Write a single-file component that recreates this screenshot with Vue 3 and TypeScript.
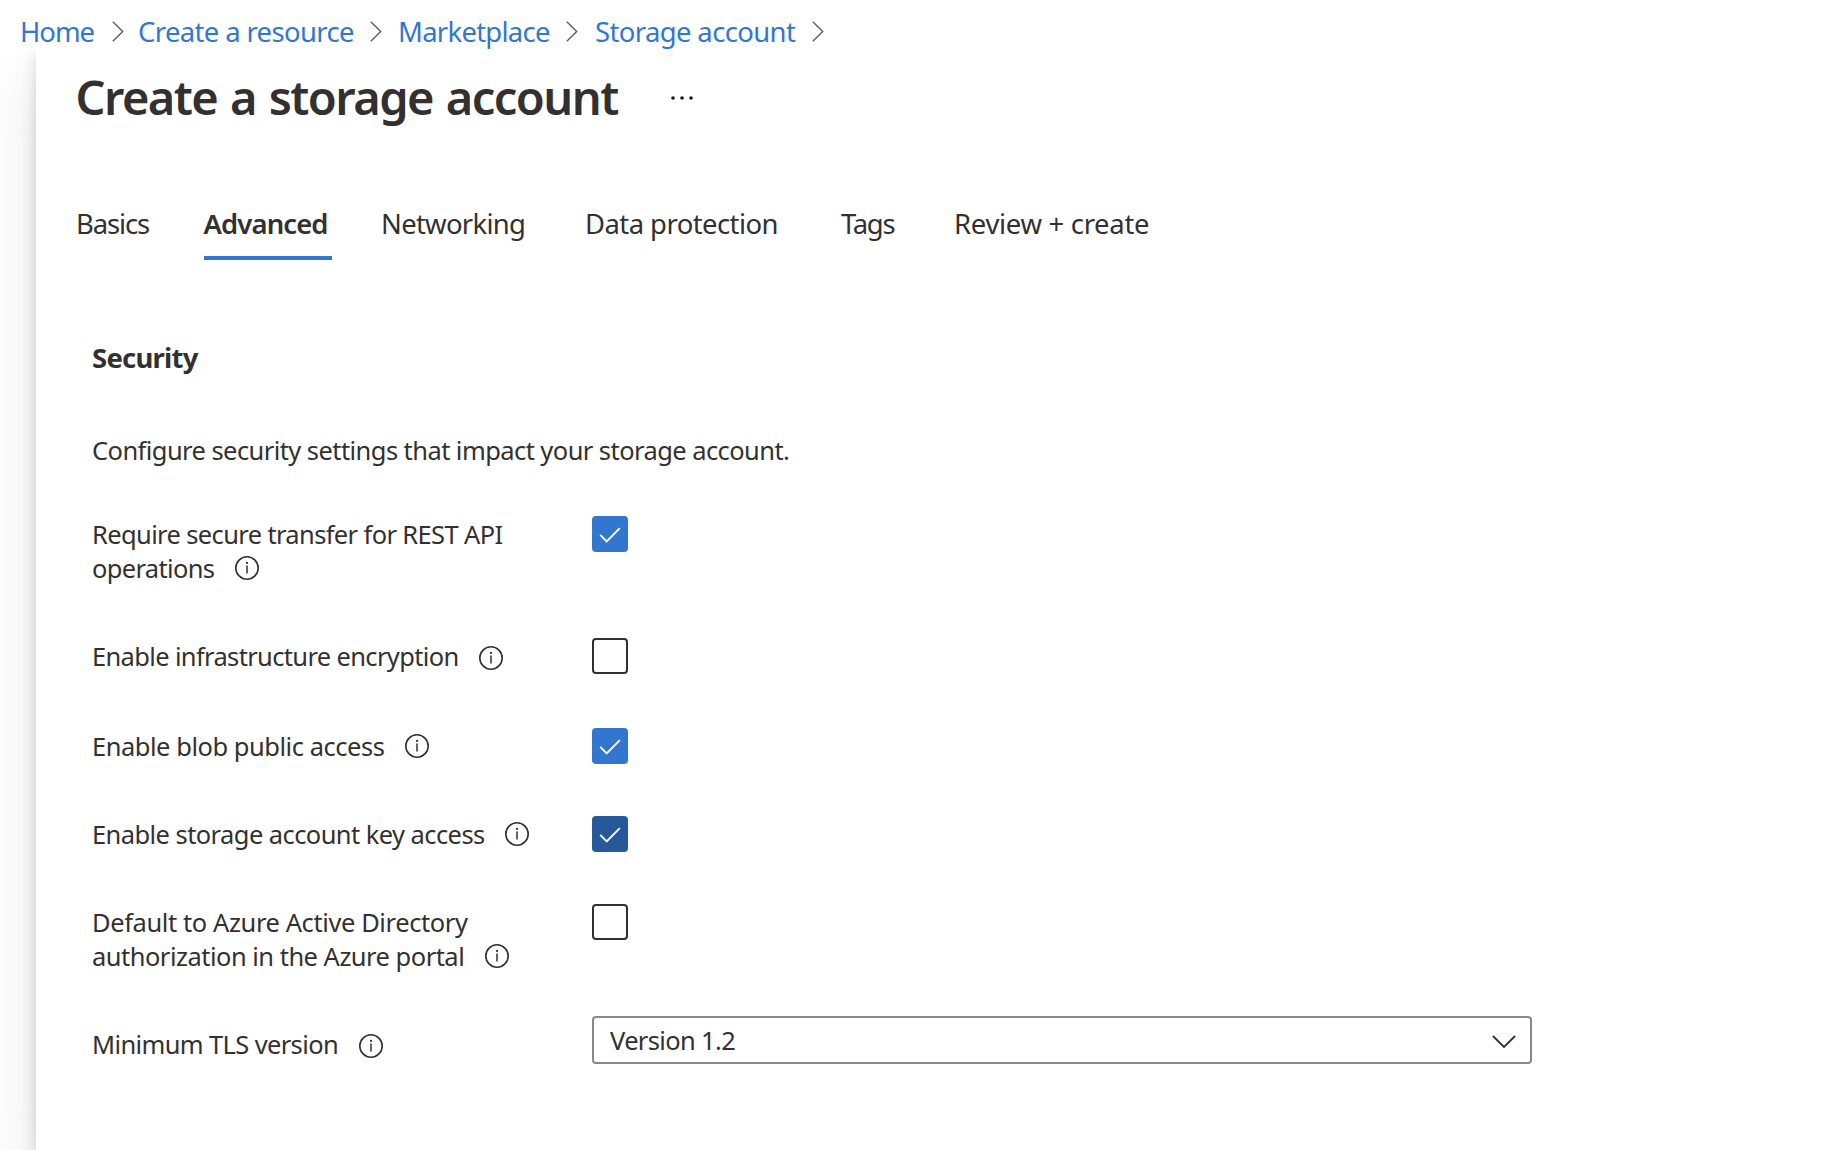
<script setup lang="ts">
interface Crumb { text: string; spacing: number }
interface Tab { text: string; spacing: number; active?: boolean }
interface Line { text: string; spacing: number }
interface Setting {
  lines: Line[]
  control: 'checkbox' | 'select'
  checked?: boolean
  hovered?: boolean
  lowered?: boolean
}

const crumbs: Crumb[] = [
  { text: 'Home', spacing: -1.0 },
  { text: 'Create a resource', spacing: -0.62 },
  { text: 'Marketplace', spacing: -0.72 },
  { text: 'Storage account', spacing: -0.61 },
]

const tabs: Tab[] = [
  { text: 'Basics', spacing: -1.1 },
  { text: 'Advanced', spacing: -0.88, active: true },
  { text: 'Networking', spacing: -0.71 },
  { text: 'Data protection', spacing: -0.55 },
  { text: 'Tags', spacing: -1.3 },
  { text: 'Review + create', spacing: -0.3 },
]

const settings: Setting[] = [
  {
    lines: [
      { text: 'Require secure transfer for REST API', spacing: -0.62 },
      { text: 'operations', spacing: -0.65 },
    ],
    control: 'checkbox',
    checked: true,
  },
  { lines: [{ text: 'Enable infrastructure encryption', spacing: -0.64 }], control: 'checkbox', lowered: true },
  { lines: [{ text: 'Enable blob public access', spacing: -0.46 }], control: 'checkbox', checked: true },
  { lines: [{ text: 'Enable storage account key access', spacing: -0.56 }], control: 'checkbox', checked: true, hovered: true },
  {
    lines: [
      { text: 'Default to Azure Active Directory', spacing: -0.39 },
      { text: 'authorization in the Azure portal', spacing: -0.5 },
    ],
    control: 'checkbox',
  },
  { lines: [{ text: 'Minimum TLS version', spacing: -0.62 }], control: 'select', lowered: true },
]
</script>

<template>
  <div class="page">
    <nav class="crumbs">
      <template v-for="c in crumbs" :key="c.text">
        <a class="crumb" :style="{ letterSpacing: c.spacing + 'px' }">{{ c.text }}</a>
        <svg class="sep" width="12" height="21" viewBox="0 0 12 21"><path d="M0.8 0.8 L10.7 10.5 L0.8 20.2" /></svg>
      </template>
    </nav>
    <div class="stage">
      <main class="blade">
        <header class="head">
          <h1>Create a storage account</h1>
          <svg class="more" width="24" height="6" viewBox="0 0 24 6">
            <circle cx="3" cy="3" r="1.8" /><circle cx="12" cy="3" r="1.8" /><circle cx="21" cy="3" r="1.8" />
          </svg>
        </header>
        <div class="tabs">
          <div v-for="t in tabs" :key="t.text" class="tab" :class="{ active: t.active }" :style="{ letterSpacing: t.spacing + 'px' }">{{ t.text }}</div>
        </div>
        <section class="form">
          <h2>Security</h2>
          <p class="intro">Configure security settings that impact your storage account.</p>
          <div class="rows">
            <div v-for="s in settings" :key="s.lines[0].text" class="row" :class="s.control">
              <div class="label">
                <div v-for="(l, i) in s.lines" :key="l.text" class="line">
                  <span :style="{ letterSpacing: l.spacing + 'px' }">{{ l.text }}</span>
                  <svg v-if="i === s.lines.length - 1" class="info" :class="{ lowered: s.lowered }" width="24" height="24" viewBox="0 0 24 24">
                    <circle cx="12" cy="12" r="11.2" fill="none" stroke="#323130" stroke-width="1.6" />
                    <circle cx="12" cy="6.9" r="1.1" fill="#323130" />
                    <path d="M12 9.6 V17.4" stroke="#323130" stroke-width="1.5" />
                  </svg>
                </div>
              </div>
              <div v-if="s.control === 'checkbox'" class="box" :class="{ checked: s.checked, hovered: s.hovered }">
                <svg v-if="s.checked" width="36" height="36" viewBox="0 0 36 36"><path d="M8.2 18.8 L14.7 25.3 L27.8 12.2" /></svg>
              </div>
              <div v-else class="dropdown">
                <span>Version 1.2</span>
                <svg width="24" height="14" viewBox="0 0 24 14"><path d="M0.9 1 L12 12 L23.1 1" /></svg>
              </div>
            </div>
          </div>
        </section>
      </main>
    </div>
  </div>
</template>

<style>
html, body { margin: 0; background: #fff; }
</style>

<style scoped>
.page {
  display: flex;
  flex-direction: column;
  height: 1150px;
  overflow: hidden;
  background: #fff;
  color: #323130;
  font-family: "Noto Sans", "Open Sans", sans-serif;
  white-space: nowrap;
}
.crumbs {
  display: grid;
  grid-template-columns: 92px 26px 232px 28px 168px 29px 217px 12px;
  align-items: center;
  box-sizing: border-box;
  height: 50px;
  padding: 13px 0 0 20px;
  line-height: 37px;
  font-size: 27.44px;
}
.crumb { color: #3277cf; }
.sep { display: block; fill: none; stroke: #605e5c; stroke-width: 1.4; }
.stage { display: flex; flex: 1; overflow: hidden; padding-left: 36px; }
.blade {
  flex: 1;
  background: #fff;
  box-shadow: 0 26px 58px rgba(0, 0, 0, 0.11), 0 5px 14px rgba(0, 0, 0, 0.15);
}
.head { display: flex; align-items: center; height: 60px; padding: 17px 0 0 39.5px; }
h1 {
  width: 594.5px;
  margin: 0;
  font-size: 47.04px;
  font-weight: 600;
  line-height: 60px;
  letter-spacing: -1.55px;
  word-spacing: 2px;
}
.more { margin-top: 2px; fill: #1b1a19; }
.tabs {
  display: grid;
  grid-template-columns: 127.5px 177.5px 204px 256px 113px 200px;
  height: 56px;
  margin: 77px 0 0 40px;
  font-size: 27.44px;
  line-height: 40px;
}
.tab.active { box-sizing: border-box; width: 128px; border-bottom: 4px solid #3277cf; font-weight: 600; }
.form { padding: 78px 0 0 56px; font-size: 25.48px; line-height: 34px; }
h2 { margin: 0; font-size: 27.44px; font-weight: 700; line-height: 40px; letter-spacing: -0.74px; }
.intro { margin: 55px 0 0; letter-spacing: -0.555px; }
.rows { display: grid; grid-template-rows: 122px 90px 88px 88px 112px 48px; margin-top: 49px; }
.row { display: flex; align-items: flex-start; }
.label { width: 500px; padding-top: 1px; }
.row.select .label { padding-top: 11px; }
.line { display: flex; align-items: center; height: 34px; }
.info { flex: none; margin-left: 20.5px; }
.info.lowered { margin-top: 4px; }
.box { box-sizing: border-box; width: 36px; height: 36px; border: 2px solid #323130; border-radius: 4px; }
.box.checked { border: 0; background: #3277cf; }
.box.checked.hovered { background: #255999; }
.box svg { display: block; fill: none; stroke: #fff; stroke-width: 1.9; }
.dropdown {
  display: flex;
  align-items: center;
  justify-content: space-between;
  box-sizing: border-box;
  width: 940px;
  height: 48px;
  padding: 0 14px 0 16px;
  border: 2px solid #8a8886;
  border-radius: 4px;
  letter-spacing: -0.64px;
}
.dropdown svg { margin-top: 4px; fill: none; stroke: #323130; stroke-width: 1.8; }
</style>
